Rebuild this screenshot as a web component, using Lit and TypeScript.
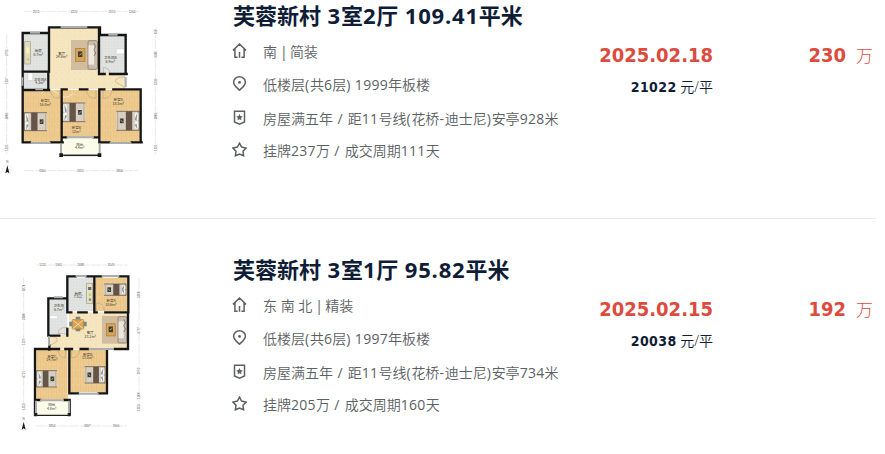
import { LitElement, css, html, svg } from 'lit'
import { customElement, property } from 'lit/decorators.js'

interface House {
	title: string;
	facing: string;
	floor: string;
	traffic: string;
	deal: string;
	date: string;
	unit: string;
	total: string;
	plan: 'wide' | 'tall';
}

const houses: House[] = [
	{
		title: '芙蓉新村 3室2厅 109.41平米',
		facing: '南 | 简装',
		floor: '低楼层(共6层) 1999年板楼',
		traffic: '房屋满五年 / 距11号线(花桥-迪士尼)安亭928米',
		deal: '挂牌237万 / 成交周期111天',
		date: '2025.02.18',
		unit: '21022',
		total: '230',
		plan: 'wide'
	},
	{
		title: '芙蓉新村 3室1厅 95.82平米',
		facing: '东 南 北 | 精装',
		floor: '低楼层(共6层) 1997年板楼',
		traffic: '房屋满五年 / 距11号线(花桥-迪士尼)安亭734米',
		deal: '挂牌205万 / 成交周期160天',
		date: '2025.02.15',
		unit: '20038',
		total: '192',
		plan: 'tall'
	}
]

const icons = {
	house: svg`<path d="M1 7.4 7.5 1l6.5 6.4M2.9 6v8.2h2.7M12.1 6v8.2H9.4M7.5 9v5.7"/>`,
	pin: svg`<path d="M7.5 14.2C4.6 11.4 1.6 9.2 1.6 6.2a5.9 5.4 0 0 1 11.8 0c0 3-3 5.2-5.9 8z"/><circle cx="7.5" cy="6.4" r="1.4" fill="currentColor" stroke="none"/>`,
	badge: svg`<path d="M2.5 1.2h10v10.7l-5 2.2-5-2.2z"/><path d="m7.5 4 1 2.1 2.3.3-1.7 1.6.4 2.3-2-1.1-2 1.1.4-2.3-1.7-1.6 2.3-.3z" fill="currentColor" stroke="none"/>`,
	star: svg`<path d="m7.5 1.2 2.1 3.9 4.5.9-3.1 3.3.6 4.5-4.1-1.8-4.1 1.8.6-4.5L.9 6l4.5-.9z"/>`
}

@customElement('floor-plan')
export class FloorPlan extends LitElement {
	@property()
	kind = 'wide';

	// bed drawn with its pillows on the left, flipped when needed
	private _bed(x: number, y: number, w: number, h: number, flip = false) {
		const t = flip ? `translate(${x + w} ${y}) scale(-1 1)` : `translate(${x} ${y})`
		return svg`<g transform=${t}>
			<rect width=${w} height=${h} fill="#d8cec1"/>
			<path d=${`M0 0v${h}M0 1h${w}M0 ${h - 1}h${w}`} stroke="#554538" stroke-width="2" fill="none"/>
			<rect x="2" y="5" width="10" height=${h / 2 - 6} rx="3" fill="#f7f5ef"/>
			<rect x="2" y=${h / 2 + 1} width="10" height=${h / 2 - 6} rx="3" fill="#f7f5ef"/>
			<path d=${`M5 4l8 ${h / 2 - 7}-6 3zM5 ${h - 4}l8-14-6-3z`} fill="#829ba8"/>
			<rect x=${w * .3} y="1" width=${w * .28} height=${h - 2} fill="#655448"/>
			<rect x=${w * .68} y=${h / 2 - 7} width="11" height="14" fill="#393c2e"/>
			<path d=${`M${w * .72} ${h / 2 + 4}l6-7`} stroke="#d5d8ac" stroke-width="2"/>
			<path d=${`M${w * .94} 2v${h - 4}`} stroke="#a99c8d" stroke-width="2"/>
		</g>`
	}

	private _sofa(x: number, y: number, w: number, h: number) {
		return svg`
			<rect x=${x} y=${y} width=${w} height=${h} fill="#d3bd9f"/>
			<rect x=${x + w * .18} y=${y + h * .28} width=${w * .38} height=${h * .44} fill="#d5a55c" stroke="#a77934" stroke-width="2"/>
			<rect x=${x + w * .28} y=${y + h * .38} width="13" height="17" fill="#433d32"/>
			<path d=${`M${x + w * .34} ${y + h * .5}l7-5`} stroke="#b2a184" stroke-width="3"/>
			<rect x=${x + w * .68} y=${y + 2} width=${w * .38} height=${h - 4} rx="4" fill="#c9bdb0" stroke="#806e61" stroke-width="2"/>
			<rect x=${x + w * .7} y=${y + 16} width=${w * .22} height=${h - 32} fill="#eee7dc"/>
			<path d=${`M${x + w * .92} ${y + 10}l5 10-5 9 5 10-5 9`} stroke="#8a7b70" stroke-width="3" fill="none"/>`
	}

	private _label(x: number, y: number, name: string, area: string) {
		return svg`<text x=${x} y=${y}>${name}</text><text x=${x} y=${y + 11}>${area}</text>`
	}

	private _compass(x: number, y: number) {
		return svg`<circle cx=${x} cy=${y} r="14" fill="none" stroke="#e5e5e5" stroke-width="2"/>
			<path d=${`M${x} ${y - 12}l6 24-6-4-6 4z`} fill="#181818"/>
			<text x=${x} y=${y - 18} class="dim">N</text>`
	}

	private _floors() {
		return svg`<defs><pattern id="wood" width="16" height="44" patternUnits="userSpaceOnUse">
			<rect width="16" height="44" fill="#edca8e"/>
			<path d="M4 0v44M12 0v44" stroke="#e9c283" stroke-width="2"/>
			<path d="M0 20h8M8 38h8" stroke="#f2d5a2" stroke-width="2"/>
		</pattern>
		<pattern id="tile" width="9" height="9" patternUnits="userSpaceOnUse">
			<rect width="9" height="9" fill="#e2e4e2"/><path d="M0 0h9M0 0v9" stroke="#dadddb" stroke-width="2"/>
		</pattern>
		<pattern id="stone" width="18" height="18" patternUnits="userSpaceOnUse">
			<rect width="18" height="18" fill="#f6e6c0"/><path d="M3 2h5v4M12 11l4 3M4 13h3" stroke="#f1dcae" stroke-width="2" fill="none"/>
		</pattern></defs>`
	}

	private _wide() {
		return svg`
			<path class="rule" d="M72 34h345M20 103v360M466 85v378M72 512h345"/>
			<path d="M150 82h147v140h78v46H150z" fill="url(#stone)"/>
			<path d="M68 100h78v113H68zM300 104h75v117h-75zM68 217h78v50H68z" fill="url(#tile)"/>
			<path d="M68 270h115v157H68zM186 270h111v140H186zM301 270h118v157H301z" fill="url(#wood)"/>
			<path d="M186 414h111v50H186z" fill="#fbfcea"/>
			<path class="mark" d="M124 280q24-24 48 0t48 0"/>
			${this._sofa(213, 120, 75, 90)}
			<rect x="74" y="125" width="17" height="67" fill="#dedbc5" stroke="#a79c7d" stroke-width="2"/>
			<rect x="78" y="142" width="10" height="18" fill="#f8efb0"/><circle cx="84" cy="178" r="4" fill="#ddc65f"/>
			<path d="M84 219h14v22H84zM349 147h24v14h-24z" fill="#fff" stroke="#b6bbb9"/>
			${this._bed(73, 337, 68, 56)}
			${this._bed(188, 308, 68, 58)}
			${this._bed(349, 333, 68, 59, true)}
			<path class="door" d="M152 271q0 24 26 24v-24M260 271q0 24 28 24v-24M335 271q0 24-26 24v-24M375 231q-29 0-29 14l29 18M310 222v-20q20 2 20 20M145 190v17"/>
			<path class="wall" d="M68 427V270h79M68 267V99h79M147 215V82h153v23h77v117M68 215h77v52M297 85v137h17M330 222h50M185 268v158M187 268h13M240 268h22M298 268v157M298 268h15M340 268h82v158M68 427h22M153 427h35M186 412h13M282 412h15M298 427h30M395 427h30"/>
			<path class="window" d="M182 81h80M90 98h30M325 104h28M67 232v25M92 429h60M329 429h65M183 431v35h116v-35M200 412h82M377 232v30M106 268h23"/>
			<path d="M178 460h11v11h-11zM293 460h11v11h-11z" fill="#181818"/>
			<path d="M190 466h104" stroke="#202020" stroke-width="4"/>
			${this._label(115, 156, '厨房', '6.7m²')}
			${this._label(185, 164, '客厅', '24.6m²')}
			${this._label(331, 178, '卫生间B', '6.9m²')}
			${this._label(120, 242, '卫生间A', '4.2m²')}
			${this._label(136, 306, '卧室C', '16.8m²')}
			${this._label(229, 388, '卧室B', '12m²')}
			${this._label(355, 303, '卧室A', '18.5m²')}
			${this._label(239, 437, '阳台', '4.4m²')}
			<g class="dim">
				<text x="108" y="38">2515</text><text x="222" y="38">4220</text><text x="336" y="38">2515</text><text x="396" y="38">1264</text>
				<text x="127" y="516">3300</text><text x="241" y="516">3315</text><text x="359" y="516">3800</text>
				<text transform="translate(24 158) rotate(-90)">3795</text><text transform="translate(24 242) rotate(-90)">1637</text><text transform="translate(24 348) rotate(-90)">3800</text><text transform="translate(24 443) rotate(-90)">1321</text>
				<text transform="translate(470 95) rotate(-90)">650</text><text transform="translate(470 163) rotate(-90)">3385</text><text transform="translate(470 246) rotate(-90)">1320</text><text transform="translate(470 348) rotate(-90)">3800</text><text transform="translate(470 443) rotate(-90)">1321</text>
			</g>
			${this._compass(22, 508)}`
	}

	private _tall() {
		return svg`
			<path class="rule" d="M78 30h275M41 68v405M387 68v405M78 513h272"/>
			<path d="M177 172h174v110H118v-42h59z" fill="url(#stone)"/>
			<path d="M175 68h76v100h-76zM118 130h54v108h-54z" fill="url(#tile)"/>
			<path d="M255 68h96v100h-96zM79 284h94v150H79zM180 284h109v128H180z" fill="url(#wood)"/>
			<path d="M79 437h97v42H79z" fill="#fbfcea"/>
			${this._sofa(276, 183, 71, 83)}
			<g transform="translate(204 207)">
				<path d="M-7-22H7v8H-7zM-7 14H7v8H-7zM-26-7h8V7h-8zM18-7h8V7h-8z" fill="#76868c"/>
				<path d="M-17-13h34v28h-34z" fill="#d9a452" stroke="#a86f2e" stroke-width="2"/>
				<path d="M-17-13l34 28M17-13l-34 28" stroke="#f2d8a5" stroke-width="3"/>
			</g>
			<rect x="230" y="85" width="18" height="60" fill="#e4e0c9" stroke="#a69b7c" stroke-width="2"/>
			<rect x="234" y="96" width="10" height="9" fill="#696f70"/><circle cx="240" cy="119" r="4" fill="#dec75e"/><circle cx="240" cy="134" r="4" fill="#799b7d"/>
			<path d="M119 182h23v9h-23z" fill="#fff" stroke="#bec3c1"/>
			${this._bed(282, 86, 66, 36, true)}
			${this._bed(80, 346, 61, 51)}
			${this._bed(224, 334, 61, 51, true)}
			<path class="door" d="M259 168v-24q24 0 24 24M172 217q-28 0-28 18l28 3M120 244q22 0 22 14l-22 14M145 284q0 24 22 24v-24M184 308q25 0 25-24M184 284v24"/>
			<path class="wall" d="M172 168V64h25M230 64h44M328 64h27v108M253 66v106h7M286 172h68v110h-40M172 130v42h12M205 172h25M172 130h-57v112h33M172 222v20M118 272v12M75 478V282h72M166 282h20M212 282h22M178 284v131h26M266 415h25V284M76 435h15M163 435h16v44"/>
			<path class="window" d="M197 63h33M275 63h53M132 127h27M117 244v28M236 282h75M206 416h60M90 436h72M78 437v40M177 437v40"/>
			<path d="M72 474h10v10H72zM173 474h9v10h-9zM82 479h91v4H82z" fill="#202020"/>
			${this._label(204, 119, '厨房', '7.5㎡')}
			${this._label(146, 156, '卫生间', '6.7m²')}
			${this._label(303, 142, '卧室A', '10.6m²')}
			${this._label(241, 237, '客厅', '23.2m²')}
			${this._label(126, 308, '卧室C', '14.7m²')}
			${this._label(233, 302, '卧室B', '13.5m²')}
			${this._label(125, 454, '阳台', '4.8m²')}
			<g class="dim">
				<text x="98" y="34">1252</text><text x="146" y="34">1901</text><text x="212" y="34">2688</text><text x="303" y="34">3149</text>
				<text x="126" y="517">3354</text><text x="232" y="517">3697</text><text x="318" y="517">1900</text>
				<text transform="translate(45 99) rotate(-90)">1874</text><text transform="translate(45 185) rotate(-90)">3380</text><text transform="translate(45 260) rotate(-90)">1229</text><text transform="translate(45 358) rotate(-90)">4721</text><text transform="translate(45 455) rotate(-90)">1353</text>
				<text transform="translate(391 119) rotate(-90)">3360</text><text transform="translate(391 226) rotate(-90)">3797</text><text transform="translate(391 348) rotate(-90)">3992</text><text transform="translate(391 422) rotate(-90)">1200</text><text transform="translate(391 458) rotate(-90)">1353</text>
			</g>
			${this._compass(41, 512)}`
	}

	render() {
		const wide = this.kind === 'wide'
		return html`<svg width=${wide ? 170 : 150} height="180" viewBox=${wide ? '0 0 510 540' : '0 0 450 540'}>
			${this._floors()}
			${wide ? this._wide() : this._tall()}
		</svg>`
	}

	static styles = css`
	:host {
		display: block;
	}

	svg {
		display: block;
	}

	.wall {
		fill: none;
		stroke: #151515;
		stroke-width: 7;
		stroke-linecap: square;
	}

	.window {
		fill: none;
		stroke: #a9adad;
		stroke-width: 6;
	}

	.door {
		fill: none;
		stroke: #b9a988;
		stroke-width: 2;
	}

	.mark {
		fill: none;
		stroke: #f8ebca;
		stroke-width: 3;
	}

	.rule {
		fill: none;
		stroke: #d2d2d2;
		stroke-width: 1.5;
		stroke-dasharray: 30 3;
	}

	text {
		font: 10.5px "Noto Sans CJK SC", sans-serif;
		fill: #40382c;
		text-anchor: middle;
	}

	.dim,
	.dim text {
		font: 9px "Liberation Sans", sans-serif;
		fill: #555;
		stroke: #fff;
		stroke-width: 3;
		paint-order: stroke;
	}
	`
}

@customElement('house-item')
export class HouseItem extends LitElement {
	@property({ attribute: false })
	house!: House;

	// digits, brackets and separators get their own spacing
	private _mixed(text: string) {
		return text.split(/([\d.]+| \/ | \| |[-()])/).map(part => {
			if (/^[\d.]/.test(part)) return html`<span class="num">${part}</span>`
			if (part === ' | ') return html`<span class="bar">${part}</span>`
			if (/^( \/ |[-()])$/.test(part)) return html`<span class="sep">${part}</span>`
			return part
		})
	}

	private _line(icon: keyof typeof icons, text: string) {
		return html`<li class=${icon}>
			<svg class="icon" width="15" height="15" viewBox="0 0 15 15">${icons[icon]}</svg>
			<span class="text">${this._mixed(text)}</span>
		</li>`
	}

	render() {
		const h = this.house
		return html`
		<floor-plan class=${h.plan} kind=${h.plan}></floor-plan>
		<div class="info">
			<h2>${this._mixed(h.title)}</h2>
			<ul>
				${this._line('house', h.facing)}
				${this._line('pin', h.floor)}
				${this._line('badge', h.traffic)}
				${this._line('star', h.deal)}
			</ul>
		</div>
		<div class="sold">
			<div class="date">${h.date}</div>
			<div class="unit"><b>${h.unit}</b> 元/平</div>
		</div>
		<div class="total"><b>${h.total}</b><span>万</span></div>
	`
	}

	static styles = css`
	:host {
		display: grid;
		grid-template-columns: 233px 1fr 120px 160px;
		width: 873px;
		white-space: nowrap;
		font-family: "Open Sans", "Noto Sans CJK SC", sans-serif;
	}

	.tall {
		padding: 1px 0 0 10px;
	}

	h2 {
		margin: 0;
		height: 31px;
		line-height: 31px;
		font-size: 22px;
		font-weight: 700;
		color: #101d37;
		word-spacing: 0.8px;
	}

	h2 .num {
		letter-spacing: 0.8px;
	}

	ul {
		list-style: none;
		margin: 3px 0 0;
		padding: 0;
	}

	li {
		display: flex;
		box-sizing: border-box;
		align-items: center;
		gap: 16px;
		height: 33px;
		margin-left: -1px;
		font-size: 14px;
		font-weight: 350;
		color: #5c6164;
	}

	li.badge {
		padding-top: 2px;
	}

	li .num,
	li .sep,
	li .bar {
		font-weight: 400;
	}

	li .num {
		letter-spacing: 0.3px;
	}

	li .sep {
		letter-spacing: 0.8px;
	}

	li .bar {
		letter-spacing: -0.7px;
	}

	.icon {
		fill: none;
		stroke: currentColor;
		stroke-width: 1.5;
	}

	.sold {
		padding-top: 43px;
		text-align: right;
	}

	.date {
		font: bold 20px/24px "DejaVu Sans Condensed", "DejaVu Sans", sans-serif;
		color: #db4c3f;
	}

	.unit {
		margin-top: 9px;
		font-size: 14px;
		font-weight: 350;
		line-height: 22px;
		color: #101d37;
	}

	.unit b {
		font: bold 14px "DejaVu Sans Condensed", "DejaVu Sans", sans-serif;
		letter-spacing: 0.4px;
	}

	.total {
		display: flex;
		justify-content: flex-end;
		align-items: baseline;
		gap: 10px;
		padding-top: 43px;
		line-height: 24px;
		color: #db4c3f;
	}

	.total b {
		font: bold 20px/24px "DejaVu Sans Condensed", "DejaVu Sans", sans-serif;
	}

	.total span {
		font-size: 17px;
		font-weight: 300;
	}
	`
}

@customElement('app-root')
export class AppRoot extends LitElement {
	render() {
		return html`${houses.map(h => html`
		<div class="row"><house-item .house=${h}></house-item></div>
		`)}`
	}

	static styles = css`
	:host {
		display: block;
		height: 454px;
		overflow: hidden;
		background: #fff;
	}

	.row {
		width: 876px;
		height: 218px;
		border-bottom: 1px solid #eaeaea;
	}

	.row + .row {
		height: 200px;
		padding-top: 35px;
		border-bottom: 0;
	}
	`
}

declare global {
	interface HTMLElementTagNameMap {
		'app-root': AppRoot
		'house-item': HouseItem
		'floor-plan': FloorPlan
	}
}
